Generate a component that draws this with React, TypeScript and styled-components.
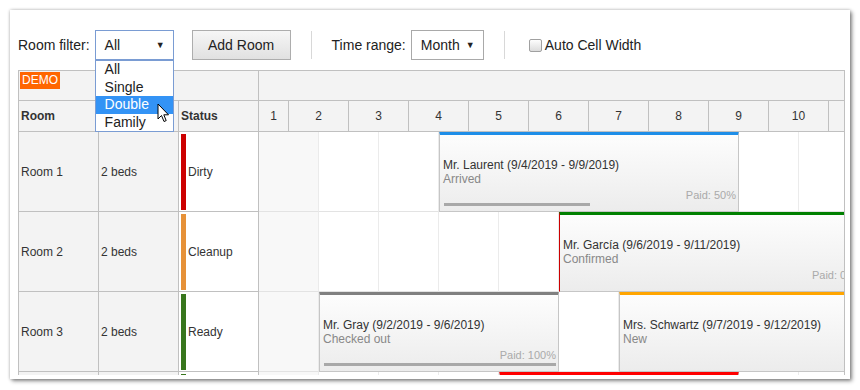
import React from "react";
import styled, { createGlobalStyle } from "styled-components";

const GlobalStyle = createGlobalStyle`
    html, body {
        margin: 0;
        padding: 0;
        background: #ffffff;
        font-family: "Liberation Sans", Arial, sans-serif;
        color: #222;
    }
`;

const Page = styled.div`
    width: 860px;
    height: 390px;
    padding: 10px 0 0 10px;
    box-sizing: border-box;
    overflow: hidden;
`;

const Panel = styled.div`
    width: 840px;
    height: 369px;
    background: #fff;
    box-sizing: border-box;
    padding: 20px 5px 4px 8px;
    box-shadow: 0 0 3px rgba(0,0,0,0.25), 2px 2px 4px rgba(0,0,0,0.45);
    overflow: hidden;
`;

const Toolbar = styled.div`
    display: flex;
    align-items: center;
    height: 30px;
    margin-bottom: 10px;
    font-size: 14px;
`;

const Label = styled.span`
    margin-right: 5px;
`;

const SelectWrap = styled.div`
    position: relative;
`;

const SelectBox = styled.div<{ w: number; focused?: boolean }>`
    width: ${p => p.w}px;
    height: 30px;
    box-sizing: border-box;
    border: 1px solid ${p => p.focused ? "#7a9cd3" : "#a9a9a9"};
    background: #fff;
    display: flex;
    align-items: center;
    justify-content: space-between;
    padding: 0 8px 0 9px;
`;

const Arrow = styled.span`
    font-size: 9px;
    color: #222;
`;

const DropList = styled.div`
    position: absolute;
    top: 30px;
    left: 0;
    width: 79px;
    box-sizing: border-box;
    border: 1px solid #7a9cd3;
    background: #fff;
    z-index: 10;
`;

const DropItem = styled.div<{ active?: boolean }>`
    height: 17.5px;
    line-height: 17.5px;
    padding-left: 9px;
    background: ${p => p.active ? "#3393f5" : "transparent"};
    color: ${p => p.active ? "#fff" : "#222"};
`;

const Cursor = styled.svg`
    position: absolute;
    left: 62px;
    top: 73px;
    z-index: 11;
`;

const Button = styled.div`
    width: 99px;
    height: 30px;
    box-sizing: border-box;
    margin-left: 18px;
    border: 1px solid #adadad;
    background: linear-gradient(to bottom, #f6f6f6, #e1e1e1);
    display: flex;
    align-items: center;
    justify-content: center;
`;

const Separator = styled.div`
    width: 1px;
    height: 28px;
    background: #d8d8d8;
    margin: 0 20px;
`;

const Checkbox = styled.span`
    width: 13px;
    height: 13px;
    box-sizing: border-box;
    border: 1px solid #a0a0a0;
    border-radius: 2px;
    background: linear-gradient(to bottom, #fdfdfd, #dcdcdc);
    margin: 0 3px 0 4px;
`;

const Scheduler = styled.div`
    width: 827px;
    height: 305px;
    box-sizing: border-box;
    border: 1px solid #c0c0c0;
    border-bottom: none;
    overflow: hidden;
    font-size: 12px;
    color: #333;
`;

const HeaderArea = styled.div`
    display: flex;
`;

const Corner = styled.div`
    width: 240px;
    flex-shrink: 0;
    background: #f3f3f3;
`;

const CornerTop = styled.div`
    height: 30px;
    box-sizing: border-box;
    border-bottom: 1px solid #c0c0c0;
    border-right: 1px solid #c0c0c0;
    padding: 1px;
`;

const Demo = styled.span`
    display: inline-block;
    background: #ff6600;
    color: #fff;
    font-size: 12px;
    line-height: 17px;
    padding: 0 2px;
`;

const CornerCols = styled.div`
    display: flex;
`;

const ColHead = styled.div`
    width: 80px;
    height: 31px;
    box-sizing: border-box;
    border-right: 1px solid #c0c0c0;
    border-bottom: 1px solid #c0c0c0;
    font-weight: bold;
    display: flex;
    align-items: center;
    padding-left: 2px;
`;

const TimeHeader = styled.div`
    flex: 1;
    overflow: hidden;
    background: #f3f3f3;
`;

const TimeTop = styled.div`
    height: 30px;
    box-sizing: border-box;
    border-bottom: 1px solid #c0c0c0;
`;

const Days = styled.div`
    display: flex;
    margin-left: -30px;
`;

// the first day is half scrolled out, its label stays in the visible half
const Day = styled.div<{ partial?: boolean }>`
    width: 60px;
    flex-shrink: 0;
    height: 31px;
    box-sizing: border-box;
    border-right: 1px solid #c0c0c0;
    border-bottom: 1px solid #c0c0c0;
    padding-left: ${p => p.partial ? 30 : 0}px;
    display: flex;
    align-items: center;
    justify-content: center;
`;

const Row = styled.div`
    display: flex;
    height: 80px;
`;

const RowCell = styled.div<{ white?: boolean }>`
    width: 80px;
    flex-shrink: 0;
    box-sizing: border-box;
    border-right: 1px solid #c0c0c0;
    border-bottom: 1px solid #c0c0c0;
    background: ${p => p.white ? "#fff" : "#f3f3f3"};
    display: flex;
    align-items: center;
    padding-left: 2px;
`;

const StatusBar = styled.span<{ color: string }>`
    align-self: stretch;
    width: 5px;
    margin: 2px 2px 1px 0;
    background: ${p => p.color};
`;

const RowGrid = styled.div`
    flex: 1;
    position: relative;
    overflow: hidden;
    display: flex;
`;

const Cell = styled.div<{ weekend?: boolean }>`
    width: 60px;
    flex-shrink: 0;
    box-sizing: border-box;
    border-right: 1px solid #ebebeb;
    border-bottom: 1px solid #e3e3e3;
    background: ${p => p.weekend ? "#f8f8f8" : "#fff"};
`;

const Event = styled.div<{ bar: string; mark?: boolean }>`
    position: absolute;
    top: -1px;
    height: 81px;
    box-sizing: border-box;
    border: 1px solid #c6c6c6;
    border-left-color: ${p => p.mark ? "#cc0000" : "#c6c6c6"};
    border-top: 4px solid ${p => p.bar};
    background: linear-gradient(to bottom, #fdfdfd, #ececec);
    display: flex;
    flex-direction: column;
    padding: 23px 2px 5px 3px;
    line-height: 14px;
    white-space: nowrap;
`;

const EventStatus = styled.div`
    color: #888;
`;

const Paid = styled.div`
    margin-top: auto;
    text-align: right;
    font-size: 11px;
    line-height: 12px;
    color: #aaa;
`;

const Progress = styled.div`
    height: 3px;
    margin: 2px 0 0 1px;
`;

const ProgressFill = styled.div`
    height: 3px;
    background: #a8a8a8;
`;

const rooms = [
    { name: "Room 1", size: "2 beds", status: "Dirty", color: "#cc0000" },
    { name: "Room 2", size: "2 beds", status: "Cleanup", color: "#e69138" },
    { name: "Room 3", size: "2 beds", status: "Ready", color: "#38761d" },
    { name: "Room 4", size: "4 beds", status: "Ready", color: "#38761d" },
];

const events = [
    { row: 0, start: 4, end: 9, text: "Mr. Laurent (9/4/2019 - 9/9/2019)", status: "Arrived", bar: "#1e8ee8", paid: 50 },
    { row: 1, start: 6, end: 11, text: "Mr. García (9/6/2019 - 9/11/2019)", status: "Confirmed", bar: "#008000", paid: 0, mark: true },
    { row: 2, start: 2, end: 6, text: "Mr. Gray (9/2/2019 - 9/6/2019)", status: "Checked out", bar: "#808080", paid: 100 },
    { row: 2, start: 7, end: 12, text: "Mrs. Schwartz (9/7/2019 - 9/12/2019)", status: "New", bar: "#ffa500", paid: 0 },
    { row: 3, start: 5, end: 9, text: "Mr. Brown (9/5/2019 - 9/9/2019)", status: "Expired", bar: "#ff0000", paid: 0 },
];

const DAY = 60;
const days = Array.from({ length: 12 }, (_, i) => i + 1);
// cells run noon to noon; 9/1/2019 was a Sunday
const isWeekend = (d: number) => [1, 7, 8].includes(d);

function App() {
    return (
        <>
            <GlobalStyle />
            <Page>
                <Panel>
                    <Toolbar>
                        <Label>Room filter:</Label>
                        <SelectWrap>
                            <SelectBox w={79} focused>
                                <span>All</span>
                                <Arrow>▼</Arrow>
                            </SelectBox>
                            <DropList>
                                <DropItem>All</DropItem>
                                <DropItem>Single</DropItem>
                                <DropItem active>Double</DropItem>
                                <DropItem>Family</DropItem>
                            </DropList>
                            <Cursor width="14" height="21" viewBox="0 0 14 21">
                                <path d="M1 1 L1 16 L4.5 12.5 L7 18.5 L9.2 17.6 L6.8 11.8 L11.5 11.8 Z" fill="#fff" stroke="#000" strokeWidth="1" strokeLinejoin="round" />
                            </Cursor>
                        </SelectWrap>
                        <Button>Add Room</Button>
                        <Separator />
                        <Label>Time range:</Label>
                        <SelectBox w={73}>
                            <span>Month</span>
                            <Arrow>▼</Arrow>
                        </SelectBox>
                        <Separator />
                        <Checkbox />
                        <span>Auto Cell Width</span>
                    </Toolbar>

                    <Scheduler>
                        <HeaderArea>
                            <Corner>
                                <CornerTop><Demo>DEMO</Demo></CornerTop>
                                <CornerCols>
                                    <ColHead>Room</ColHead>
                                    <ColHead />
                                    <ColHead>Status</ColHead>
                                </CornerCols>
                            </Corner>
                            <TimeHeader>
                                <TimeTop />
                                <Days>
                                    {days.map(d => <Day key={d} partial={d === 1}>{d}</Day>)}
                                </Days>
                            </TimeHeader>
                        </HeaderArea>

                        {rooms.map((room, i) => (
                            <Row key={room.name}>
                                <RowCell>{room.name}</RowCell>
                                <RowCell>{room.size}</RowCell>
                                <RowCell white>
                                    <StatusBar color={room.color} />
                                    {room.status}
                                </RowCell>
                                <RowGrid>
                                    {days.map(d => <Cell key={d} weekend={isWeekend(d)} />)}
                                    {events.filter(e => e.row === i).map(e => (
                                        <Event key={e.text} bar={e.bar} mark={e.mark}
                                            style={{ left: (e.start - 1) * DAY, width: (e.end - e.start) * DAY }}>
                                            <div>{e.text}</div>
                                            <EventStatus>{e.status}</EventStatus>
                                            <Paid>Paid: {e.paid}%</Paid>
                                            <Progress>
                                                <ProgressFill style={{ width: `${e.paid}%` }} />
                                            </Progress>
                                        </Event>
                                    ))}
                                </RowGrid>
                            </Row>
                        ))}
                    </Scheduler>
                </Panel>
            </Page>
        </>
    );
}

export default App;
